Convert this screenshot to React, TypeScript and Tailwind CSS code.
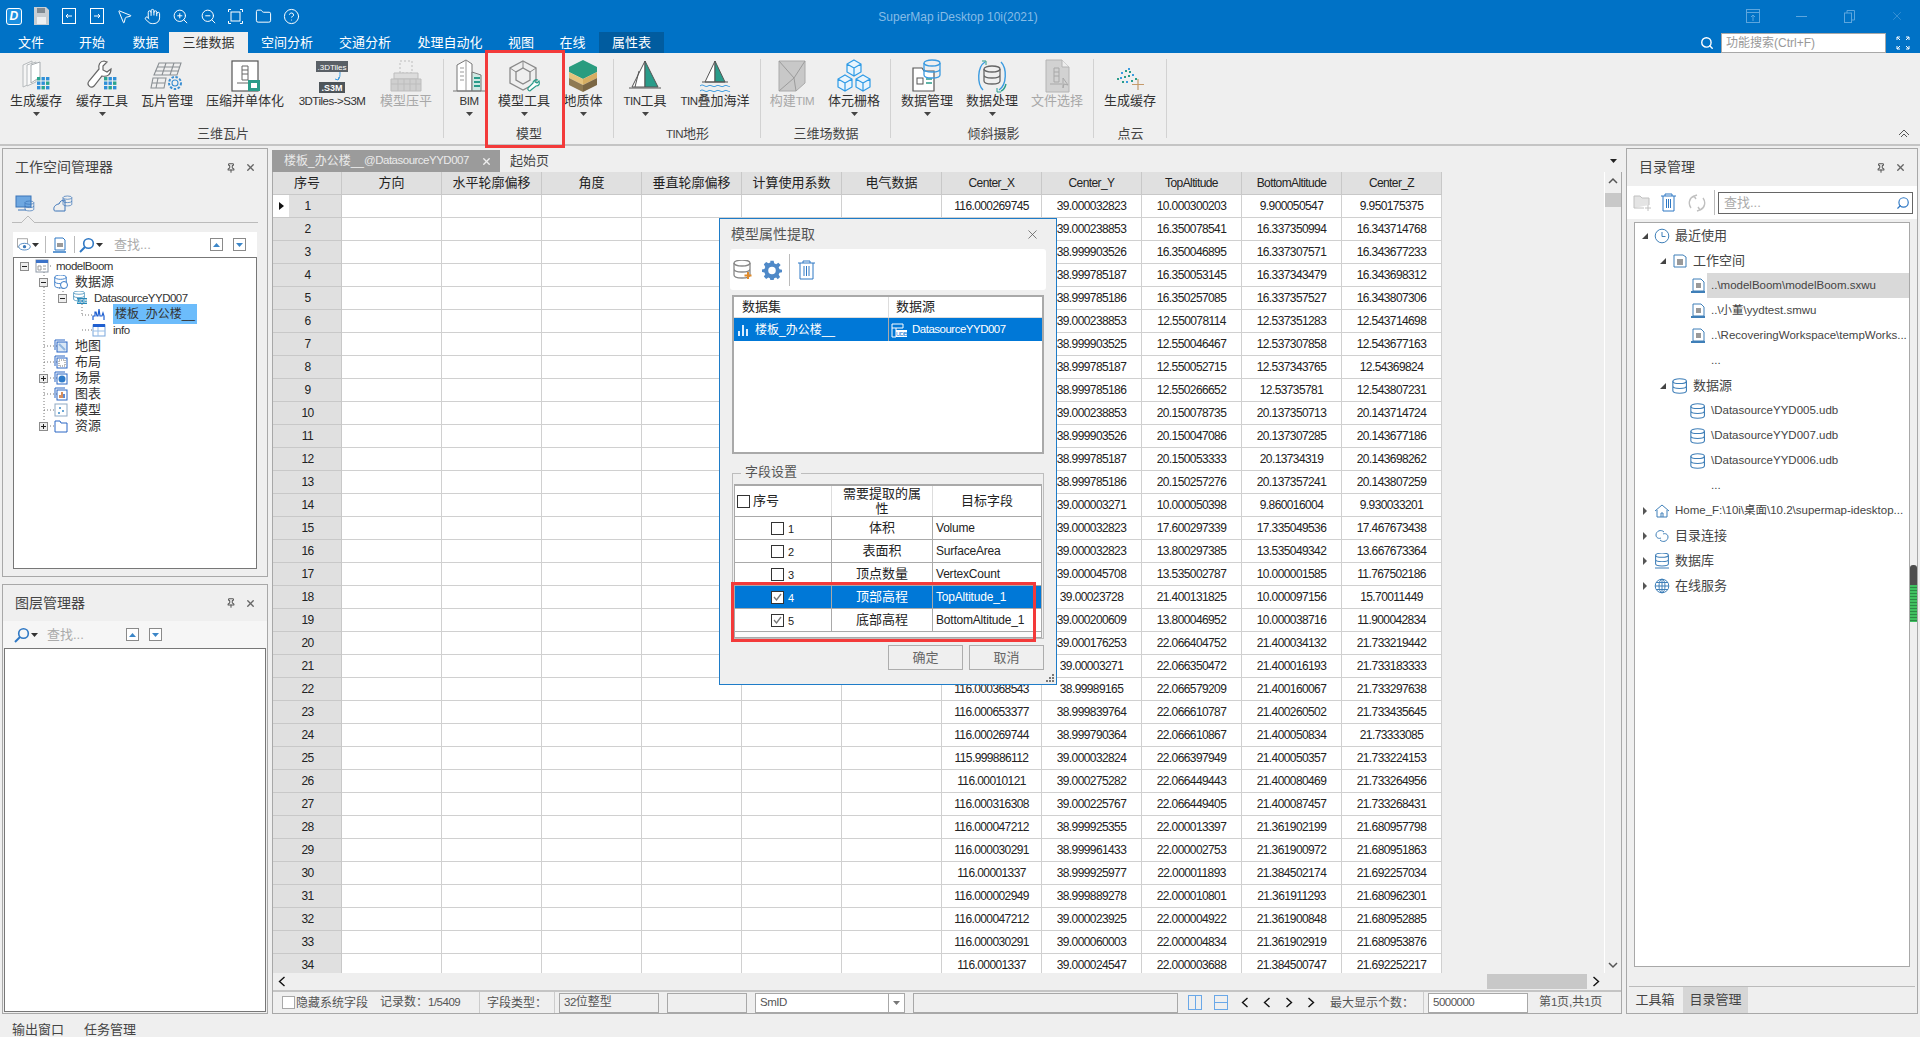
import React from "react";
import { MousePointer2, Hand, ZoomIn, ZoomOut, Folder, CircleHelp, Search, X, Pin } from "lucide-react";

const LAT = "text-[11.5px] tracking-[-0.5px]";
const NUM = "text-[12px] tracking-[-0.6px]";
const FIELD = "text-[12px] tracking-[-0.2px]";

const rows: string[][] = [
  ["116.000269745", "39.000032823", "10.000300203", "9.900050547", "9.950175375"],
  ["", "39.000238853", "16.350078541", "16.337350994", "16.343714768"],
  ["", "38.999903526", "16.350046895", "16.337307571", "16.343677233"],
  ["", "38.999785187", "16.350053145", "16.337343479", "16.343698312"],
  ["", "38.999785186", "16.350257085", "16.337357527", "16.343807306"],
  ["", "39.000238853", "12.550078114", "12.537351283", "12.543714698"],
  ["", "38.999903525", "12.550046467", "12.537307858", "12.543677163"],
  ["", "38.999785187", "12.550052715", "12.537343765", "12.54369824"],
  ["", "38.999785186", "12.550266652", "12.53735781", "12.543807231"],
  ["", "39.000238853", "20.150078735", "20.137350713", "20.143714724"],
  ["", "38.999903526", "20.150047086", "20.137307285", "20.143677186"],
  ["", "38.999785187", "20.150053333", "20.13734319", "20.143698262"],
  ["", "38.999785186", "20.150257276", "20.137357241", "20.143807259"],
  ["", "39.000003271", "10.000050398", "9.860016004", "9.930033201"],
  ["", "39.000032823", "17.600297339", "17.335049536", "17.467673438"],
  ["", "39.000032823", "13.800297385", "13.535049342", "13.667673364"],
  ["", "39.000045708", "13.535002787", "10.000001585", "11.767502186"],
  ["", "39.00023728", "21.400131825", "10.000097156", "15.70011449"],
  ["", "39.000200609", "13.800046952", "10.000038716", "11.900042834"],
  ["", "39.000176253", "22.066404752", "21.400034132", "21.733219442"],
  ["", "39.00003271", "22.066350472", "21.400016193", "21.733183333"],
  ["116.000368543", "38.99989165", "22.066579209", "21.400160067", "21.733297638"],
  ["116.000653377", "38.999839764", "22.066610787", "21.400260502", "21.733435645"],
  ["116.000269744", "38.999790364", "22.066610867", "21.400050834", "21.73333085"],
  ["115.999886112", "39.000032824", "22.066397949", "21.400050357", "21.733224153"],
  ["116.00010121", "39.000275282", "22.066449443", "21.400080469", "21.733264956"],
  ["116.000316308", "39.000225767", "22.066449405", "21.400087457", "21.733268431"],
  ["116.000047212", "38.999925355", "22.000013397", "21.361902199", "21.680957798"],
  ["116.000030291", "38.999961433", "22.000002753", "21.361900972", "21.680951863"],
  ["116.00001337", "38.999925977", "22.000011893", "21.384502174", "21.692257034"],
  ["116.000002949", "38.999889278", "22.000010801", "21.361911293", "21.680962301"],
  ["116.000047212", "39.000023925", "22.000004922", "21.361900848", "21.680952885"],
  ["116.000030291", "39.000060003", "22.000004834", "21.361902919", "21.680953876"],
  ["116.00001337", "39.000024547", "22.000003688", "21.384500747", "21.692252217"],
];

const cnCols = ["方向", "水平轮廓偏移", "角度", "垂直轮廓偏移", "计算使用系数", "电气数据"];
const enCols = ["Center_X", "Center_Y", "TopAltitude", "BottomAltitude", "Center_Z"];

const Tri = ({ className = "" }: { className?: string }) => (
  <svg width="7" height="4" viewBox="0 0 7 4" className={className}>
    <path d="M0 0h7L3.5 4z" fill="currentColor" />
  </svg>
);

const Dots = ({ x, y }: { x: number; y: number }) => (
  <g>
    {[0, 1, 2].map(r =>
      [0, 1, 2].map(c => (
        <rect key={`${r}${c}`} x={x + c * 4.5} y={y + r * 4.5} width="3.4" height="3.4" fill={(r + c) % 3 === 0 ? "#2aa58f" : "#2f8fd8"} />
      ))
    )}
  </g>
);

const DbShape = ({ x, y, c, w = 16 }: { x: number; y: number; c: string; w?: number }) => (
  <g fill="none" stroke={c} strokeWidth="1.3">
    <ellipse cx={x + w / 2} cy={y + 3} rx={w / 2} ry="3" />
    <path d={`M${x} ${y + 3}v12c0 4 ${w} 4 ${w} 0v-12M${x} ${y + 9}c0 4 ${w} 4 ${w} 0`} />
  </g>
);

const ribbonIcons: Record<string, React.ReactNode> = {
  cache: (
    <>
      <path d="M5 7l9-4v22l-9 4z" fill="#f5f5f5" stroke="#b6babd" />
      <path d="M9 7l9-3v20l-9 4z" fill="#fafafa" stroke="#b6babd" />
      <path d="M13 7l9-3v15l-9 6z" fill="#fff" stroke="#a6abaf" />
      <Dots x={19} y={19} />
    </>
  ),
  wrench: (
    <>
      <path d="M20 3c-4 0-6 4-5 8L5 23c-3 4 2 8 5 5l8-10c5 1 9-1 9-7l-4 3-4-2v-4l4-4z" fill="#fff" stroke="#666" strokeWidth="1.2" />
      <Dots x={20} y={19} />
    </>
  ),
  tile: (
    <g stroke="#8a8f93" fill="none" strokeWidth="1.1">
      <path d="M10 5h22l-4 12H5zM17 5l-4 12M25 5l-4 12M8 9h23M6 13h24" />
      <path d="M4 20h13l-2 10H2zM9 20l-2 10M3 25h13" />
      <circle cx="26" cy="25" r="3" stroke="#3b8fd3" />
      <circle cx="26" cy="25" r="6" stroke="#3b8fd3" strokeDasharray="2.5 1.5" strokeWidth="2" />
    </g>
  ),
  doc: (
    <>
      <rect x="5" y="3" width="26" height="30" fill="#fff" stroke="#555" strokeWidth="1.2" />
      <path d="M15 8h6v14h-6zM15 12h6M15 16h6M10 25h14" stroke="#666" fill="none" />
      <rect x="21" y="22" width="12" height="11" fill="#2a9c8a" />
      <rect x="24" y="25" width="6" height="5" fill="#fff" />
    </>
  ),
  tiles3d: (
    <>
      <rect x="2" y="3" width="32" height="11" fill="#5a6066" />
      <text x="18" y="11.5" fontSize="8" fill="#fff" textAnchor="middle" fontFamily="Liberation Sans">.3DTiles</text>
      <path d="M26 14c0 4 0 6-2 8m0 0l-3-1m3 1l1-3" stroke="#3b9be0" fill="none" />
      <rect x="5" y="24" width="26" height="11" fill="#4e555a" />
      <text x="18" y="33" fontSize="9" fontWeight="bold" fill="#fff" textAnchor="middle" fontFamily="Liberation Sans">.S3M</text>
    </>
  ),
  flat: (
    <g stroke="#bdbdbd" fill="none">
      <path d="M12 3h12v12H12z" strokeDasharray="2 2" />
      <path d="M6 15h24v6H6z" fill="#dcdcdc" />
      <path d="M3 21h30v12H3zM3 26h30M10 21v12M16 21v12M22 21v12M28 21v12" fill="#cfcfcf" />
    </g>
  ),
  bim: (
    <>
      <path d="M6 7l9-5 6 4v27H6z" fill="#fff" stroke="#777" />
      <path d="M15 2v31M9 10h4M9 14h4M9 18h4M9 22h4" stroke="#999" />
      <path d="M21 14l9 3v16h-9z" fill="#cfe9e3" stroke="#777" />
      <path d="M23 20h6M23 24h6M23 28h6" stroke="#2a9c8a" strokeWidth="2" />
      <path d="M2 33h32" stroke="#777" />
    </>
  ),
  model: (
    <>
      <path d="M17 3l13 7v15l-13 7-13-7V10z" fill="none" stroke="#8a8a8a" strokeWidth="1.3" />
      <path d="M17 10l7 4v8l-7 4-7-4v-8z" fill="none" stroke="#8a8a8a" strokeWidth="1.3" />
      <path d="M17 3v7M30 10l-6 4M4 10l6 4" stroke="#8a8a8a" />
      <path d="M32 22c-3-1-5 1-5 3l-5 5c-1 2 2 4 3 2l5-4c3 0 4-2 3-5l-2 2-2-1v-2z" fill="#fff" stroke="#2a9c8a" strokeWidth="1.2" />
    </>
  ),
  geo: (
    <>
      <path d="M18 2l14 7v5l-14 7-14-7V9z" fill="#2a9c7f" />
      <path d="M4 14l14 7v6L4 20z" fill="#e6c37c" />
      <path d="M32 14l-14 7v6l14-7z" fill="#d6ae62" />
      <path d="M4 20l14 7v7L4 27z" fill="#8f7a52" />
      <path d="M32 20l-14 7v7l14-7z" fill="#7b6744" />
    </>
  ),
  tin: (
    <>
      <path d="M18 3L5 29h13z" fill="#fff" stroke="#555" />
      <path d="M18 3l13 26H18z" fill="#2a9c8a" stroke="#555" />
      <path d="M12 13l-4 16M2 30h32" stroke="#555" />
    </>
  ),
  ocean: (
    <>
      <path d="M18 3L8 24h10z" fill="#fff" stroke="#555" />
      <path d="M18 3l10 21H18z" fill="#2a9c8a" stroke="#555" />
      <path d="M5 24h26" stroke="#555" />
      <path d="M3 28c3-3 5 2 8 0s5 2 8 0 5 2 8 0 5 2 6 0M3 33c3-3 5 2 8 0s5 2 8 0 5 2 8 0 5 2 6 0" stroke="#3b9be0" fill="none" />
    </>
  ),
  tim: (
    <>
      <path d="M5 3h26v22l-9 8H5z" fill="#c8c8c8" stroke="#aaa" />
      <path d="M5 3l15 17 11-17M20 20l2 13M20 20L5 33" stroke="#9c9c9c" fill="none" />
    </>
  ),
  voxel: (
    <g fill="#e9f5fd" stroke="#2e9be6" strokeWidth="1.2">
      <path d="M18 2l7 4v8l-7 4-7-4V6zM18 10l-7-4M18 10l7-4M18 10v8" />
      <path d="M9 17l7 4v8l-7 4-7-4v-8zM9 25l-7-4M9 25l7-4M9 25v8" />
      <path d="M27 17l7 4v8l-7 4-7-4v-8zM27 25l-7-4M27 25l7-4M27 25v8" />
    </g>
  ),
  dataMgr: (
    <>
      <path d="M4 10h9l2 3h10v20H4z" fill="#fff" stroke="#555" strokeWidth="1.2" />
      <rect x="8" y="20" width="6" height="6" fill="none" stroke="#555" />
      <path d="M17 21h6M17 25h6" stroke="#2a9c8a" strokeWidth="1.5" />
      <g transform="translate(15 2)"><DbShape x={0} y={0} c="#3b9be0" /></g>
    </>
  ),
  dataProc: (
    <>
      <g transform="translate(10 8)"><DbShape x={0} y={0} c="#666" /></g>
      <path d="M11 4C3 9 3 26 9 32M25 32c8-5 8-22 2-28" fill="none" stroke="#3b9be0" strokeWidth="1.4" />
      <path d="M27 33c3-1 4-3 5-7" fill="none" stroke="#2a9c8a" strokeWidth="1.4" />
      <path d="M8 3h4v4M27 34h-4v-4" fill="none" stroke="#2a9c8a" />
    </>
  ),
  fileSel: (
    <>
      <path d="M7 2h16l7 7v25H7z" fill="#d2d2d2" stroke="#b4b4b4" />
      <path d="M23 2v7h7" fill="#eee" stroke="#b4b4b4" />
      <path d="M15 10h5v14h-5zM15 14h5M15 18h5M11 26h12M24 20l5 7-4-1-1 4z" stroke="#a8a8a8" fill="none" />
    </>
  ),
  cloud: (
    <g>
      {[[9, 14], [13, 12], [17, 13], [8, 19], [12, 18], [16, 17], [20, 16], [5, 20], [10, 23], [14, 23], [19, 22], [23, 20], [16, 10]].map(([x, y], i) => (
        <rect key={i} x={x} y={y} width="2" height="2" fill={i % 3 ? "#2a9c8a" : "#3b9be0"} />
      ))}
      <path d="M26 21v11M20 26.5h12" stroke="#c59a6b" strokeWidth="1.2" />
    </g>
  ),
};

type Btn = { w: string; icon: string; label: React.ReactNode; arrow?: boolean; off?: boolean };
type Group = { cls: string; label: React.ReactNode; btns: Btn[] };

const groups: Group[] = [
  {
    cls: "w-[440px]",
    label: "三维瓦片",
    btns: [
      { w: "w-[66px]", icon: "cache", label: "生成缓存", arrow: true },
      { w: "w-[66px]", icon: "wrench", label: "缓存工具", arrow: true },
      { w: "w-[64px]", icon: "tile", label: "瓦片管理" },
      { w: "w-[92px]", icon: "doc", label: "压缩并单体化" },
      { w: "w-[82px]", icon: "tiles3d", label: <span className={LAT}>3DTiles-&gt;S3M</span> },
      { w: "w-[66px]", icon: "flat", label: "模型压平", off: true },
    ],
  },
  {
    cls: "w-[169px] pl-[1px]",
    label: "模型",
    btns: [
      { w: "w-[48px]", icon: "bim", label: <span className={LAT}>BIM</span>, arrow: true },
      { w: "w-[62px]", icon: "model", label: "模型工具", arrow: true },
      { w: "w-[56px]", icon: "geo", label: "地质体", arrow: true },
    ],
  },
  {
    cls: "w-[146px] pl-[1px]",
    label: <span><span className={LAT}>TIN</span>地形</span>,
    btns: [
      { w: "w-[60px]", icon: "tin", label: <span><span className={LAT}>TIN</span>工具</span>, arrow: true },
      { w: "w-[80px]", icon: "ocean", label: <span><span className={LAT}>TIN</span>叠加海洋</span> },
    ],
  },
  {
    cls: "w-[129px] pl-[1px]",
    label: "三维场数据",
    btns: [
      { w: "w-[60px]", icon: "tim", label: <span>构建<span className={LAT}>TIM</span></span>, off: true },
      { w: "w-[64px]", icon: "voxel", label: "体元栅格", arrow: true },
    ],
  },
  {
    cls: "w-[202px] pl-[3px]",
    label: "倾斜摄影",
    btns: [
      { w: "w-[66px]", icon: "dataMgr", label: "数据管理", arrow: true },
      { w: "w-[64px]", icon: "dataProc", label: "数据处理", arrow: true },
      { w: "w-[66px]", icon: "fileSel", label: "文件选择", off: true },
    ],
  },
  {
    cls: "w-[72px] pl-[1px]",
    label: "点云",
    btns: [{ w: "w-[70px]", icon: "cloud", label: "生成缓存" }],
  },
];

const menus = [
  { t: "文件", c: "w-[62px]" },
  { t: "开始", c: "w-[60px]" },
  { t: "数据", c: "w-[47px]" },
  { t: "三维数据", c: "w-[79px] bg-[#efefef] text-[#333]" },
  { t: "空间分析", c: "w-[78px]" },
  { t: "交通分析", c: "w-[78px]" },
  { t: "处理自动化", c: "w-[92px]" },
  { t: "视图", c: "w-[50px]" },
  { t: "在线", c: "w-[53px]" },
  { t: "属性表", c: "w-[65px] bg-[#015c9f]" },
];

const Cell = ({ children }: { children: React.ReactNode }) => <div className="flex w-[27.75px] justify-center">{children}</div>;

function TitleBar() {
  const s = { size: 17, strokeWidth: 1.4, color: "#fff" };
  return (
    <div className="relative flex h-[32px] items-center bg-[#0072c6]">
      <Cell>
        <div className="flex h-[17px] w-[16px] items-center justify-center rounded-[3px] border border-white bg-[#1b8fe0] text-[12px] font-bold italic text-white">D</div>
      </Cell>
      <Cell>
        <svg width="15" height="18" viewBox="0 0 15 18"><path d="M0 0h12l3 3v15H0z" fill="#c9ced3" /><rect x="3" y="1" width="8" height="5" fill="#808a92" /><rect x="3" y="10" width="9" height="7" fill="#eef0f2" /></svg>
      </Cell>
      {[0, 1].map(i => (
        <Cell key={i}>
          <svg width="14" height="16" viewBox="0 0 14 16" fill="none" stroke="#fff"><rect x=".5" y=".5" width="13" height="15" />{i === 0 ? <path d="M10 8H4m2-2L4 8l2 2" /> : <path d="M4 8h6M8 6l2 2-2 2" />}</svg>
        </Cell>
      ))}
      <Cell><MousePointer2 {...s} /></Cell>
      <Cell><Hand {...s} /></Cell>
      <Cell><ZoomIn {...s} /></Cell>
      <Cell><ZoomOut {...s} /></Cell>
      <Cell>
        <svg width="15" height="15" viewBox="0 0 15 15" fill="none" stroke="#fff"><path d="M3 .5H.5V3M12 .5h2.500V3M3 14.500H.5V12M12 14.500h2.500V12" /><rect x="3" y="3" width="9" height="9" /></svg>
      </Cell>
      <Cell><Folder {...s} /></Cell>
      <Cell><CircleHelp {...s} /></Cell>
      <div className="absolute left-[858px] top-[8px] w-[200px] whitespace-nowrap text-center text-[12px] text-[#86bce6]">SuperMap iDesktop 10i(2021)</div>
      <div className="ml-auto flex items-center text-[#5da6de]">
        <div className="flex w-[48px] justify-center">
          <svg width="14" height="14" viewBox="0 0 14 14" fill="none" stroke="currentColor"><rect x=".5" y=".5" width="13" height="13" /><path d="M1 3.500h12M7 12V6M5 8l2-2 2 2" /></svg>
        </div>
        <div className="flex w-[48px] justify-center"><div className="h-px w-[11px] bg-current" /></div>
        <div className="flex w-[48px] justify-center">
          <svg width="11" height="13" viewBox="0 0 11 13" fill="none" stroke="currentColor"><rect x=".5" y="3" width="7" height="9.500" /><path d="M3 3V.5h7.500V10H8" /></svg>
        </div>
        <div className="flex w-[47px] justify-center"><X size={14} strokeWidth={1} /></div>
      </div>
    </div>
  );
}

function MenuBar() {
  return (
    <div className="flex h-[21px] items-stretch bg-[#0072c6] text-[13px] text-white">
      {menus.map(m => (
        <div key={m.t} className={`flex items-center justify-center ${m.c}`}>{m.t}</div>
      ))}
      <div className="ml-auto flex items-center">
        <Search size={14} strokeWidth={2.4} color="#fff" className="mr-[7px]" />
        <div className="flex h-[20px] w-[165px] items-center border border-[#a8a8a8] bg-white pl-[4px] text-[12px] text-[#999]">功能搜索(Ctrl+F)</div>
        <div className="flex w-[34px] justify-center">
          <svg width="14" height="14" viewBox="0 0 14 14" fill="none" stroke="#fff"><path d="M1 4V1h3M13 4V1h-3M1 10v3h3M13 10v3h-3M1 1l3 3M13 1l-3 3M1 13l3-3M13 13l-3-3" /></svg>
        </div>
      </div>
    </div>
  );
}

function Ribbon() {
  return (
    <div className="relative flex h-[93px] border-b-2 border-[#c4c4c4] bg-[#efefef] pl-[3px] text-[13px] text-[#333]">
      {groups.map((g, gi) => (
        <React.Fragment key={gi}>
          <div className={`flex flex-col pt-[5px] ${g.cls}`}>
            <div className="flex h-[66px]">
              {g.btns.map((b, i) => (
                <div key={i} className={`flex flex-col items-center ${b.w} ${b.off ? "text-[#a8a8a8]" : ""}`}>
                  <svg width="36" height="36" viewBox="0 0 36 36">{ribbonIcons[b.icon]}</svg>
                  <div className="h-[14px] whitespace-nowrap leading-[14px]">{b.label}</div>
                  {b.arrow && <Tri className="mt-[4px] text-[#444]" />}
                </div>
              ))}
            </div>
            <div className="flex h-[21px] items-center justify-center whitespace-nowrap text-[#444]">{g.label}</div>
          </div>
          <div className="mt-[6px] h-[79px] w-px bg-[#d2d2d2]" />
        </React.Fragment>
      ))}
      <svg width="12" height="10" viewBox="0 0 12 10" fill="none" stroke="#555" className="absolute left-[1898px] top-[76px]"><path d="M1 6l5-5 5 5M3 8l3-3 3 3" /></svg>
    </div>
  );
}

const PanelHead = ({ title, cls }: { title: string; cls: string }) => (
  <div className={`flex items-center pl-[12px] pr-[11px] text-[14px] text-[#444] ${cls}`}>
    <span>{title}</span>
    <Pin size={10} strokeWidth={2.5} color="#555" className="ml-auto" />
    <X size={11} strokeWidth={3} color="#666" className="ml-[9px]" />
  </div>
);

const Exp = ({ plus }: { plus?: boolean }) => (
  <div className="relative z-10 flex h-[9px] w-[9px] items-center justify-center border border-[#8c8c8c] bg-[#eee]">
    <svg width="7" height="7" viewBox="0 0 7 7" stroke="#222"><path d="M1 3.500h5" />{plus && <path d="M3.500 1v5" />}</svg>
  </div>
);

const TreeIco = ({ k }: { k: string }) => {
  const c = "#2a66c4";
  const map: Record<string, React.ReactNode> = {
    ws: <><rect x="1" y="1" width="12" height="12" fill="#fff" stroke="#8d98a6" /><rect x="1" y="1" width="12" height="3" fill="#3b72c8" /><path d="M3 7h3v4H3zM8 7h3M8 10h3" stroke="#999" fill="none" /></>,
    db: <><g transform="translate(0 0) scale(.72)"><DbShape x={1} y={0} c="#3a7cc8" /></g><circle cx="10" cy="10" r="3.500" fill="#fff" stroke="#3a7cc8" /></>,
    ds: <><g transform="scale(.6 .55)"><DbShape x={1} y={0} c="#3b8ab8" w={18} /></g><rect x="4" y="7" width="10" height="6" fill="#2a88b8" /><text x="9" y="12" fontSize="5" fill="#fff" textAnchor="middle">UDB</text></>,
    model: <path d="M1 13V9h2V5h1l1 4h1l1-7 1 7h2l1-3 1 3v4" fill="none" stroke="#1f5fd0" strokeWidth="1.2" />,
    table: <><rect x="1" y="2" width="12" height="11" fill="#fff" stroke="#7aa7dc" /><rect x="1" y="1" width="12" height="3" fill="#1f5fd0" /><path d="M1 8h12M6 4v9" stroke="#9cc0e8" /></>,
    map: <><rect x="3" y="3" width="10" height="10" fill="#d9e7f6" stroke={c} /><path d="M1 11V1h10" fill="none" stroke={c} /><path d="M5 5l6 6" stroke="#8fb4de" strokeWidth="2" /></>,
    layout: <><rect x="3" y="3" width="10" height="10" fill="#fff" stroke={c} /><path d="M1 11V1h10" fill="none" stroke={c} /><rect x="5" y="5" width="6" height="6" fill="none" stroke="#777" strokeDasharray="1 1" /></>,
    scene: <><rect x="3" y="3" width="10" height="10" fill="#fff" stroke={c} /><path d="M1 11V1h10" fill="none" stroke={c} /><circle cx="8" cy="8" r="3.500" fill="#2f7bc8" /></>,
    chart: <><rect x="3" y="3" width="10" height="10" fill="#fff" stroke={c} /><path d="M1 11V1h10" fill="none" stroke={c} /><path d="M6 11V8M8 11V5" stroke="#c86a2a" strokeWidth="1.500" /><path d="M10 11V7" stroke="#2a66c4" strokeWidth="1.500" /></>,
    mod: <><rect x="1" y="1" width="12" height="12" fill="#fff" stroke="#8fa9c4" /><path d="M5 5h2M8 8h2M4 10h2" stroke="#3a8ac8" strokeWidth="1.500" /></>,
    res: <path d="M1 13V2h5l1 2h6v9z" fill="#fff" stroke={c} />,
  };
  return <svg width="14" height="14" viewBox="0 0 14 14" className="ml-[6px] shrink-0">{map[k]}</svg>;
};

type TreeRow = { lv: string; exp?: "m" | "p"; ico: string; text: React.ReactNode; sel?: boolean };
const leftTree: TreeRow[] = [
  { lv: "pl-[6px]", exp: "m", ico: "ws", text: <span className={LAT}>modelBoom</span> },
  { lv: "pl-[25px]", exp: "m", ico: "db", text: "数据源" },
  { lv: "pl-[44px]", exp: "m", ico: "ds", text: <span className={LAT}>DatasourceYYD007</span> },
  { lv: "pl-[63px]", ico: "model", text: <span className="text-[12px]">楼板_办公楼__</span>, sel: true },
  { lv: "pl-[63px]", ico: "table", text: <span className={LAT}>info</span> },
  { lv: "pl-[25px]", ico: "map", text: "地图" },
  { lv: "pl-[25px]", ico: "layout", text: "布局" },
  { lv: "pl-[25px]", exp: "p", ico: "scene", text: "场景" },
  { lv: "pl-[25px]", ico: "chart", text: "图表" },
  { lv: "pl-[25px]", ico: "mod", text: "模型" },
  { lv: "pl-[25px]", exp: "p", ico: "res", text: "资源" },
];

const SearchBtn = ({ up }: { up?: boolean }) => (
  <div className="flex h-[13px] w-[13px] items-center justify-center border border-[#8a8a8a] bg-white">
    <svg width="7" height="4" viewBox="0 0 7 4"><path d={up ? "M0 4h7L3.500 0z" : "M0 0h7L3.500 4z"} fill="#3b86c8" /></svg>
  </div>
);

const Magnifier = () => (
  <svg width="16" height="16" viewBox="0 0 16 16" fill="none" stroke="#2f78c4" strokeWidth="1.6"><circle cx="9.500" cy="6.500" r="4.800" /><path d="M6 10l-5 5" strokeWidth="2" /></svg>
);

function LeftPanels() {
  return (
    <div className="flex w-[272px] shrink-0 flex-col gap-[7px] pb-0 pl-[2px] pr-[4px] pt-[2px]">
      <div className="flex h-[429px] flex-col border border-[#a8a8a8]">
        <PanelHead title="工作空间管理器" cls="h-[37px]" />
        <div className="relative mx-[9px] flex h-[37px] items-center gap-[18px] border-b border-[#bbb] pl-[3px]">
          <svg width="20" height="18" viewBox="0 0 20 18"><rect x="1" y="1" width="15" height="11" fill="#6ea7e0" stroke="#3b74b8" /><path d="M3 15h8" stroke="#3b74b8" /><g transform="translate(10 6) scale(.55)"><DbShape x={0} y={0} c="#3b74b8" /></g></svg>
          <svg width="20" height="18" viewBox="0 0 20 18"><path d="M1 15c-1-4 3-6 5-6 1-3 3-4 6-4v11H3c-1 0-2 0-2-1z" fill="none" stroke="#3b74b8" /><g transform="translate(10 1) scale(.55)"><DbShape x={0} y={0} c="#3b74b8" /></g></svg>
          <svg width="14" height="8" viewBox="0 0 14 8" className="absolute bottom-[-1px] left-[9px]"><path d="M0 8l7-7 7 7" fill="#efefef" stroke="#bbb" /></svg>
        </div>
        <div className="mx-[10px] mt-[9px] flex h-[25px] items-center bg-white pl-[4px] pr-[11px] text-[13px] text-[#aaa]">
          <svg width="15" height="16" viewBox="0 0 18 16" fill="none"><rect x=".5" y=".5" width="12" height="10" stroke="#999" /><ellipse cx="9" cy="10" rx="7" ry="4" fill="#fff" stroke="#3b78b8" /><circle cx="9" cy="10" r="2" fill="#3b78b8" /></svg>
          <Tri className="text-[#333]" />
          <div className="ml-[6px] h-[17px] w-px bg-[#bbb]" />
          <svg width="15" height="16" viewBox="0 0 15 16" className="ml-[6px]"><path d="M3 1h8l2 2v10H3z" fill="#fff" stroke="#2f78c4" /><rect x="5" y="6" width="6" height="4" fill="#999" /><path d="M1 15h13" stroke="#2f78c4" strokeWidth="1.500" /></svg>
          <div className="ml-[7px] h-[17px] w-px bg-[#bbb]" />
          <div className="ml-[4px]"><Magnifier /></div>
          <Tri className="ml-[1px] text-[#333]" />
          <span className="ml-[11px] text-[13px]">查找...</span>
          <div className="ml-auto flex gap-[10px]"><SearchBtn up /><SearchBtn /></div>
        </div>
        <div className="relative mx-[10px] mb-[7px] flex-1 border border-[#777] bg-white text-[13px] text-[#333]">
          <svg width="100" height="180" className="absolute left-0 top-0" fill="none" stroke="#777" strokeDasharray="1 2">
            <path d="M30 8h7M30 14v150M30 24h5M49 30h-4M49 30v8M49 40h5M68 40v17M68 57h10M68 72h10M30 88h15M30 104h15M30 120h15M30 136h15M30 152h15M30 168h15" />
          </svg>
          {leftTree.map((r, i) => (
            <div key={i} className={`relative flex h-[16px] items-center ${r.lv}`}>
              {r.exp ? <Exp plus={r.exp === "p"} /> : <div className="w-[9px]" />}
              <TreeIco k={r.ico} />
              <span className={`ml-[7px] whitespace-nowrap ${r.sel ? "ml-[4px] bg-[#6cbcfb] px-[2px]" : ""}`}>{r.text}</span>
            </div>
          ))}
        </div>
      </div>
      <div className="flex flex-1 flex-col border border-[#a8a8a8]">
        <PanelHead title="图层管理器" cls="h-[36px]" />
        <div className="flex h-[27px] items-center bg-[#f6f6f6] pl-[11px] text-[13px] text-[#aaa]">
          <Magnifier />
          <Tri className="ml-[1px] text-[#333]" />
          <span className="ml-[9px]">查找...</span>
          <div className="ml-[42px] flex gap-[10px]"><SearchBtn up /><SearchBtn /></div>
        </div>
        <div className="mx-[1px] mb-[1px] flex-1 border border-[#777] bg-white" />
      </div>
    </div>
  );
}

function DataGrid() {
  return (
    <div className="relative h-[801px] overflow-hidden bg-[#efefef] text-[#222]">
      <div className="flex h-[23px]">
        <div className="flex w-[69px] items-center justify-center border-r border-b border-[#c8c8c8] bg-[#e0e0e0] text-[13px]">序号</div>
        {cnCols.map(c => (
          <div key={c} className="flex w-[100px] items-center justify-center border-r border-b border-[#c8c8c8] bg-[#e0e0e0] text-[13px]">{c}</div>
        ))}
        {enCols.map(c => (
          <div key={c} className={`flex w-[100px] items-center justify-center border-r border-b border-[#c8c8c8] bg-[#e0e0e0] ${NUM}`}>{c}</div>
        ))}
      </div>
      {rows.map((r, i) => (
        <div key={i} className="flex h-[23px]">
          <div className="flex w-[69px] border-b border-r border-[#c8c8c8] bg-[#e0e0e0]">
            <div className={`flex w-[16px] items-center justify-center ${i === 0 ? "bg-white" : ""}`}>
              {i === 0 && <svg width="5" height="8" viewBox="0 0 5 8"><path d="M0 0l5 4-5 4z" fill="#111" /></svg>}
            </div>
            <div className={`flex w-[37px] items-center justify-center ${NUM}`}>{i + 1}</div>
          </div>
          {cnCols.map(c => (
            <div key={c} className="w-[100px] border-b border-r border-[#d0d0d0] bg-white" />
          ))}
          {r.map((v, j) => (
            <div key={j} className={`flex w-[100px] items-center justify-center border-b border-r border-[#d0d0d0] bg-white ${NUM}`}>{v}</div>
          ))}
        </div>
      ))}
    </div>
  );
}

const StatusBox = ({ cls, children }: { cls: string; children?: React.ReactNode }) => (
  <div className={`flex h-[20px] shrink-0 items-center border border-[#a8a8a8] pl-[4px] ${cls}`}>{children}</div>
);

const Chev = ({ dir }: { dir: "l" | "r" }) => (
  <svg width="8" height="11" viewBox="0 0 8 11" fill="none" stroke="#111" strokeWidth="1.4"><path d={dir === "l" ? "M6.500 1L1.500 5.500l5 4.500" : "M1.500 1l5 4.500-5 4.500"} /></svg>
);

function Center() {
  return (
    <div className="flex w-[1350px] shrink-0 flex-col pt-[4px]">
      <div className="flex h-[22px] shrink-0 items-stretch text-[#444]">
        <div className="flex w-[228px] items-center bg-[#9b9b9b] pl-[12px] text-[12px] text-[#eaeaea]">
          楼板_办公楼__<span className={LAT}>@DatasourceYYD007</span>
          <X size={11} strokeWidth={3} color="#eee" className="ml-[12px]" />
        </div>
        <div className="flex items-center pl-[10px] text-[13px]">起始页</div>
        <Tri className="ml-auto mr-[5px] self-center text-[#222]" />
      </div>
      <div className="min-h-0 flex-1 border-x border-b border-[#a8a8a8]">
        <div className="flex h-[801px]">
          <div className="w-[1331px]"><DataGrid /></div>
          <div className="flex h-[801px] w-[17px] flex-col items-center border-l border-white">
            <svg width="10" height="7" viewBox="0 0 10 7" fill="none" stroke="#555" strokeWidth="1.500" className="mt-[5px]"><path d="M1 6l4-4 4 4" /></svg>
            <div className="mt-[9px] h-[14px] w-full bg-[#c8c8c8]" />
            <svg width="10" height="7" viewBox="0 0 10 7" fill="none" stroke="#555" strokeWidth="1.500" className="mt-auto mb-[4px]"><path d="M1 1l4 4 4-4" /></svg>
          </div>
        </div>
        <div className="flex h-[17px] items-center">
          <div className="ml-[5px]"><Chev dir="l" /></div>
          <div className="ml-[1201px] h-[15px] w-[100px] bg-[#c8c8c8]" />
          <div className="ml-[5px]"><Chev dir="r" /></div>
        </div>
        <div className="flex h-[23px] items-center border-t-2 border-[#c4c4c4] text-[12px] text-[#555]">
          <div className="ml-[9px] h-[13px] w-[13px] shrink-0 border border-[#a8a8a8] bg-white" />
          <span className="ml-[1px] w-[71px] whitespace-nowrap">隐藏系统字段</span>
          <span className="ml-[13px] w-[99px] whitespace-nowrap">记录数：<span className={LAT}>1/5409</span></span>
          <div className="h-full w-px shrink-0 bg-[#ccc]" />
          <span className="ml-[7px] w-[67px] whitespace-nowrap">字段类型：</span>
          <div className="h-full w-px shrink-0 bg-[#ccc]" />
          <StatusBox cls="ml-[4px] w-[100px]"><span><span className={LAT}>32</span>位整型</span></StatusBox>
          <StatusBox cls="ml-[8px] w-[80px]" />
          <div className={`ml-[8px] flex h-[20px] w-[150px] shrink-0 items-center border border-[#a8a8a8] bg-white pl-[4px] ${LAT}`}>
            SmID
            <div className="ml-auto flex h-full w-[16px] items-center justify-center border-l border-[#a8a8a8]"><Tri className="text-[#777]" /></div>
          </div>
          <StatusBox cls="ml-[8px] w-[265px]" />
          <div className="ml-[10px] flex h-[15px] w-[14px] shrink-0 border border-[#6aa8e8]"><div className="ml-[6px] w-px bg-[#6aa8e8]" /></div>
          <div className="ml-[12px] flex h-[15px] w-[14px] shrink-0 flex-col border border-[#6aa8e8]"><div className="mt-[6px] h-px bg-[#6aa8e8]" /></div>
          <div className="ml-[13px] flex w-[74px] shrink-0 justify-between"><Chev dir="l" /><Chev dir="l" /><Chev dir="r" /><Chev dir="r" /></div>
          <span className="ml-[15px] w-[93px] whitespace-nowrap">最大显示个数：</span>
          <div className="h-full w-px shrink-0 bg-[#ccc]" />
          <div className={`ml-[4px] flex h-[20px] w-[100px] shrink-0 items-center border border-[#a8a8a8] bg-white pl-[4px] ${LAT}`}>5000000</div>
          <span className="ml-[11px] whitespace-nowrap">第<span className={LAT}>1</span>页,共<span className={LAT}>1</span>页</span>
        </div>
      </div>
    </div>
  );
}

const RIco = ({ k }: { k: string }) => {
  const c = "#3f7fb8";
  const map: Record<string, React.ReactNode> = {
    clock: <><circle cx="8" cy="8" r="6.800" fill="none" stroke={c} /><path d="M8 4v4.500h3.500" fill="none" stroke={c} /></>,
    ws: <><path d="M2 2h9l3 2v10H2z" fill="#fff" stroke={c} /><rect x="5" y="6" width="6" height="6" fill="#999" /></>,
    file: <><path d="M3 1h8l3 3v9H3z" fill="#fff" stroke={c} /><rect x="6" y="5" width="5" height="5" fill="#999" /><path d="M1 14h14" stroke={c} strokeWidth="2" /></>,
    db: <g transform="scale(.85 .8)"><DbShape x={1} y={1} c={c} /></g>,
    home: <path d="M1 8l7-6 7 6M3 7v7h10V7M7 14v-4h2v4" fill="none" stroke={c} />,
    link: <path d="M10 4C7 1 2 3 2 7c0 3 3 4 5 3M6 12c3 3 8 1 8-3 0-3-3-4-5-3" fill="none" stroke={c} />,
    base: <><g transform="scale(.8 .72)"><DbShape x={2} y={0} c={c} /></g><path d="M1 15h14" stroke={c} /></>,
    globe: <><circle cx="8" cy="8" r="6.800" fill="none" stroke={c} /><path d="M1 8h14M2 4.500h12M2 11.500h12M8 1v14" stroke={c} fill="none" /><ellipse cx="8" cy="8" rx="3" ry="6.800" fill="none" stroke={c} /></>,
  };
  return <svg width="16" height="16" viewBox="0 0 16 16" className="shrink-0">{map[k]}</svg>;
};

const Arrow = ({ open }: { open?: boolean }) =>
  open ? (
    <svg width="8" height="8" viewBox="0 0 8 8"><path d="M7 1v6H1z" fill="#444" /></svg>
  ) : (
    <svg width="8" height="8" viewBox="0 0 8 8"><path d="M2 0l4 4-4 4z" fill="#555" /></svg>
  );

type RRow = { lv: string; arrow?: "o" | "c"; ico?: string; text: string; sel?: boolean };
const rightTree: RRow[] = [
  { lv: "pl-[6px]", arrow: "o", ico: "clock", text: "最近使用" },
  { lv: "pl-[24px]", arrow: "o", ico: "ws", text: "工作空间" },
  { lv: "pl-[42px]", ico: "file", text: "..\\modelBoom\\modelBoom.sxwu", sel: true },
  { lv: "pl-[42px]", ico: "file", text: "..\\小董\\yydtest.smwu" },
  { lv: "pl-[42px]", ico: "file", text: "..\\RecoveringWorkspace\\tempWorks..." },
  { lv: "pl-[42px]", text: "..." },
  { lv: "pl-[24px]", arrow: "o", ico: "db", text: "数据源" },
  { lv: "pl-[42px]", ico: "db", text: "\\DatasourceYYD005.udb" },
  { lv: "pl-[42px]", ico: "db", text: "\\DatasourceYYD007.udb" },
  { lv: "pl-[42px]", ico: "db", text: "\\DatasourceYYD006.udb" },
  { lv: "pl-[42px]", text: "..." },
  { lv: "pl-[6px]", arrow: "c", ico: "home", text: "Home_F:\\10i\\桌面\\10.2\\supermap-idesktop..." },
  { lv: "pl-[6px]", arrow: "c", ico: "link", text: "目录连接" },
  { lv: "pl-[6px]", arrow: "c", ico: "base", text: "数据库" },
  { lv: "pl-[6px]", arrow: "c", ico: "globe", text: "在线服务" },
];

function RightPanel() {
  return (
    <div className="ml-[4px] mt-[2px] flex w-[292px] shrink-0 flex-col border border-[#a8a8a8]">
      <PanelHead title="目录管理" cls="h-[37px]" />
      <div className="flex h-[33px] items-center bg-white pl-[6px]">
        <svg width="19" height="17" viewBox="0 0 19 17" fill="none" stroke="#c0c0c0"><path d="M1 14V2h6l2 2h7v7" fill="#e4e4e4" /><path d="M1 14h10M15 11v6M12 14h6" /></svg>
        <svg width="17" height="19" viewBox="0 0 17 19" fill="none" stroke="#2f78c4" className="ml-[8px]"><path d="M1 3h15M5 3V1h7v2M3 3v15h11V3M6.500 6v9M8.500 6v9M10.500 6v9" /></svg>
        <svg width="18" height="18" viewBox="0 0 18 18" fill="none" stroke="#c0c0c0" strokeWidth="1.400" className="ml-[11px]"><path d="M3 14C0 10 1 4 6 2M15 4c3 4 2 10-3 12M9 1l-3 1 2 3M9 17l3-1-2-3" /></svg>
        <div className="ml-[8px] h-[25px] w-px bg-[#bbb]" />
        <div className="ml-[3px] flex h-[22px] w-[195px] items-center border border-[#666] bg-white pl-[5px] pr-[2px] text-[13px] text-[#aaa]">
          查找...
          <Search size={14} color="#2f78c4" className="ml-auto scale-x-[-1]" />
        </div>
      </div>
      <div className="mx-[7px] mt-[3px] h-[745px] overflow-hidden border border-[#a8a8a8] bg-white text-[13px] text-[#444]">
        {rightTree.map((r, i) => (
          <div key={i} className={`flex h-[25px] items-center ${r.lv}`}>
            <div className="flex w-[8px] shrink-0 justify-center">{r.arrow && <Arrow open={r.arrow === "o"} />}</div>
            <div className="ml-[5px] w-[16px] shrink-0">{r.ico && <RIco k={r.ico} />}</div>
            <div className={`ml-[1px] flex h-full flex-1 items-center whitespace-nowrap pl-[4px] ${r.sel ? "bg-[#d9d9d9]" : ""} ${/^[\u4e00-\u9fa5]/.test(r.text) ? "text-[13px]" : "text-[11.5px]"}`}>
              {r.text}
            </div>
          </div>
        ))}
      </div>
      <div className="mx-[2px] mt-[19px] flex h-[27px] border-t border-[#bbb] text-[13px] text-[#444]">
        <div className="flex w-[52px] items-center justify-center">工具箱</div>
        <div className="ml-[2px] flex w-[65px] items-center justify-center bg-[#d6d6d6]">目录管理</div>
      </div>
    </div>
  );
}

const Check = ({ on, cls = "" }: { on?: boolean; cls?: string }) => (
  <div className={`flex h-[13px] w-[13px] shrink-0 items-center justify-center border border-[#333] bg-white ${cls}`}>
    {on && <svg width="9" height="8" viewBox="0 0 9 8" fill="none" stroke="#777" strokeWidth="1.300"><path d="M1 4l2.500 3L8 1" /></svg>}
  </div>
);

const fields = [
  { n: 1, a: "体积", b: "Volume" },
  { n: 2, a: "表面积", b: "SurfaceArea" },
  { n: 3, a: "顶点数量", b: "VertexCount" },
  { n: 4, a: "顶部高程", b: "TopAltitude_1", sel: true, on: true },
  { n: 5, a: "底部高程", b: "BottomAltitude_1", on: true },
];

function Dialog() {
  return (
    <div className="absolute left-[719px] top-[218px] flex h-[467px] w-[338px] flex-col border border-[#1e7cc8] bg-[#efefef] text-[#222]">
      <div className="flex h-[30px] items-center pl-[11px] pr-[16px] text-[14px] text-[#555]">
        模型属性提取
        <X size={15} strokeWidth={1.2} color="#555" className="ml-auto" />
      </div>
      <div className="mx-[10px] flex h-[41px] items-center rounded-[3px] bg-white pl-[3px]">
        <svg width="20" height="20" viewBox="0 0 20 20"><g transform="scale(1)"><DbShape x={1} y={0} c="#888" /></g><path d="M15 12v7M11.500 15.500h7" stroke="#e08a2a" strokeWidth="2" /></svg>
        <svg width="20" height="20" viewBox="0 0 24 24" className="ml-[9px]"><path d="M10 1h4l.6 3 2.400 1 2.600-1.700 2.800 2.800L20 8.700l1 2.400 3 .6v3l-3 .6-1 2.400 1.700 2.600-2.800 2.800L17 21l-2.400 1-.6 2h-4l-.6-2L7.600 21l-2.600 1.700-2.800-2.800L3.900 17.300l-1-2.400-3-.6v-3l3-.6 1-2.400L2.200 5.100 5 2.300 7.600 4 10 3z" fill="#4f89c8" /><circle cx="12" cy="12.500" r="4.500" fill="#fff" /></svg>
        <div className="ml-[7px] h-[32px] w-px bg-[#bbb]" />
        <svg width="19" height="20" viewBox="0 0 19 20" fill="none" stroke="#2f78c4" className="ml-[7px]"><path d="M1 3h17M6 3V1h7v2M3 3v16h13V3M7 6v10M9.500 6v10M12 6v10" /></svg>
      </div>
      <div className="mx-[12px] mt-[5px] h-[159px] border-2 border-[#a9a9a9] bg-white">
        <div className="flex h-[21px] border-b border-[#ddd] text-[13px]">
          <div className="flex w-[155px] items-center border-r border-[#ddd] pl-[8px]">数据集</div>
          <div className="flex flex-1 items-center pl-[7px]">数据源</div>
        </div>
        <div className="flex h-[23px] bg-[#0078d7] text-white">
          <div className="flex w-[155px] items-center border-r border-[#a9a9a9] pl-[3px] text-[12px]">
            <svg width="13" height="13" viewBox="0 0 13 13" fill="#dbeeff"><path d="M1 13V8h2v5zM5 13V2h2v11zM9 13V6h2v7z" /></svg>
            <span className="ml-[5px]">楼板_办公楼__</span>
          </div>
          <div className={`flex flex-1 items-center pl-[2px] ${LAT}`}>
            <svg width="17" height="16" viewBox="0 0 17 16"><path d="M1 2h11v4H1zM1 6v9h4V6" fill="none" stroke="#fff" /><rect x="5" y="8" width="11" height="7" fill="#fff" /><text x="10.500" y="14" fontSize="6" fill="#0078d7" textAnchor="middle">UDB</text></svg>
            <span className="ml-[4px]">DatasourceYYD007</span>
          </div>
        </div>
      </div>
      <div className="relative mx-[12px] mt-[19px] h-[166px] border border-[#bdbdbd] px-[1px] pt-[10px]">
        <div className="absolute left-[8px] top-[-12px] bg-[#efefef] px-[4px] text-[13px] text-[#555]">字段设置</div>
        <div className="h-[154px] border-x border-b border-t-2 border-[#a9a9a9] bg-[#fbfbfb] text-[13px]">
          <div className="grid h-[31px] grid-cols-[97px_101px_1fr] border-b border-[#a9a9a9] bg-white">
            <div className="flex items-center border-r border-[#ddd] pl-[2px]"><Check /><span className="ml-[3px]">序号</span></div>
            <div className="flex items-center justify-center border-r border-[#ddd] px-[8px] text-center leading-[15px]">需要提取的属性</div>
            <div className="flex items-center justify-center">目标字段</div>
          </div>
          {fields.map(f => (
            <div key={f.n} className={`grid h-[23px] grid-cols-[97px_101px_1fr] border-b border-[#a9a9a9] ${f.sel ? "bg-[#0078d7] text-white" : "bg-white"}`}>
              <div className="flex items-center border-r border-[#a9a9a9] pl-[36px]">
                <Check on={f.on} />
                <span className="ml-[4px] mt-[3px] text-[11px]">{f.n}</span>
              </div>
              <div className="flex items-center justify-center border-r border-[#a9a9a9]">{f.a}</div>
              <div className={`flex items-center pl-[3px] ${FIELD}`}>{f.b}</div>
            </div>
          ))}
        </div>
      </div>
      <div className="mr-[12px] mt-[6px] flex justify-end gap-[6px] text-[13px] text-[#666]">
        <div className="flex h-[25px] w-[75px] items-center justify-center border border-[#adadad]">确定</div>
        <div className="flex h-[25px] w-[75px] items-center justify-center border border-[#adadad]">取消</div>
      </div>
      <svg width="9" height="9" viewBox="0 0 9 9" className="absolute bottom-[1px] right-[1px]" fill="#777">
        <path d="M6 0h2v2H6zM3 3h2v2H3zM6 3h2v2H6zM0 6h2v2H0zM3 6h2v2H3zM6 6h2v2H6z" />
      </svg>
    </div>
  );
}

export default function App() {
  return (
    <div className="relative flex h-[1037px] w-[1920px] flex-col overflow-hidden bg-[#efefef] font-[family-name:'Liberation_Sans','Noto_Sans_CJK_SC',sans-serif]">
      <TitleBar />
      <MenuBar />
      <Ribbon />
      <div className="flex h-[868px] shrink-0">
        <LeftPanels />
        <Center />
        <RightPanel />
      </div>
      <div className="flex h-[23px] shrink-0 items-start gap-[20px] pl-[12px] pt-[7px] text-[13px] leading-[18px] text-[#444]">
        <span>输出窗口</span>
        <span>任务管理</span>
      </div>
      <Dialog />
      {/* annotation boxes */}
      <div className="absolute left-[485px] top-[50px] h-[98px] w-[80px] border-[3px] border-[#f33a3a]" />
      <div className="absolute left-[731px] top-[582px] h-[60px] w-[305px] border-[3px] border-[#f33a3a]" />
      <div className="absolute left-[1910px] top-[565px] h-[57px] w-[7px] overflow-hidden rounded-t-[3px] bg-[#4d4d4d]">
        <div className="mt-[20px] h-full bg-[repeating-linear-gradient(to_bottom,#3fc060_0,#3fc060_2px,#2a8a45_2px,#2a8a45_3px)]" />
      </div>
    </div>
  );
}
